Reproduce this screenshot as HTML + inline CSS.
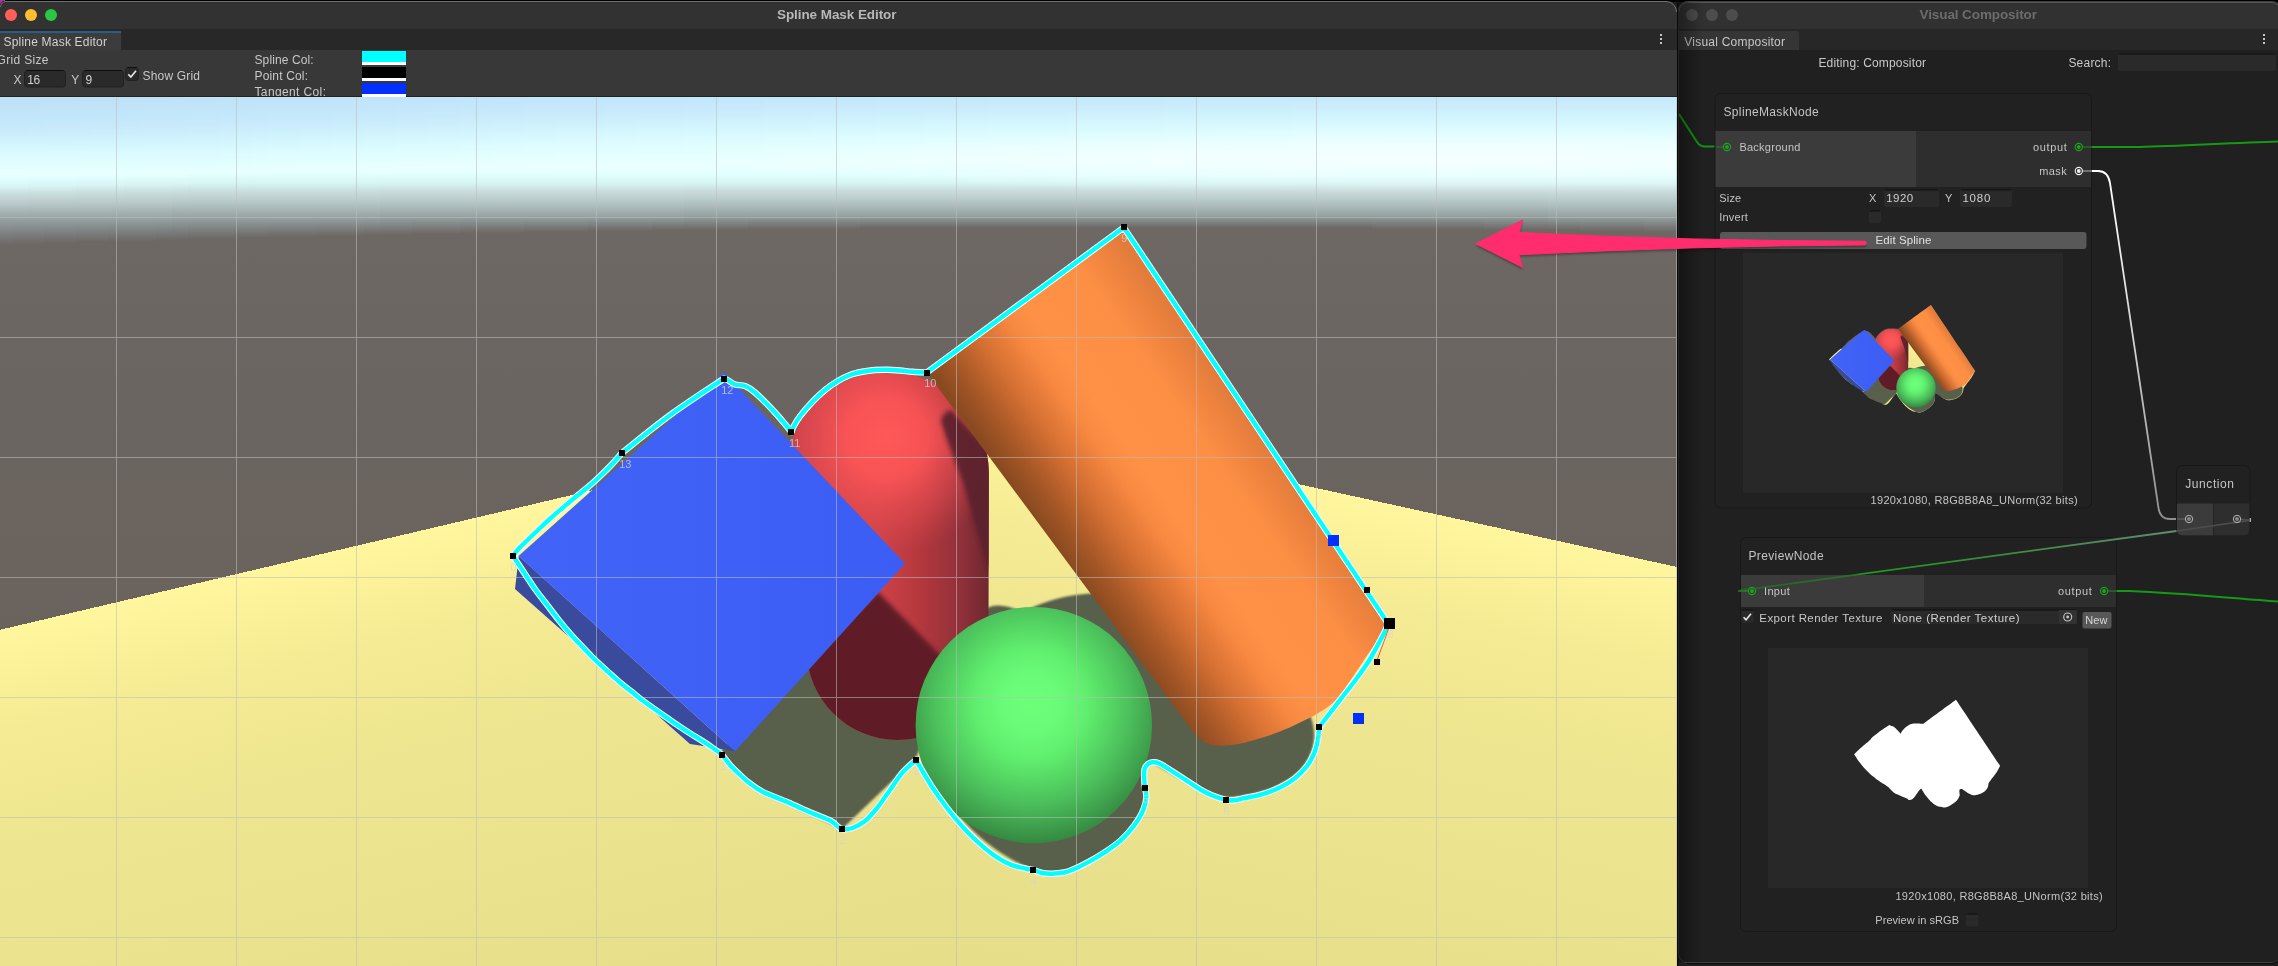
<!DOCTYPE html>
<html><head><meta charset="utf-8"><title>Spline Mask Editor</title>
<style>html,body{margin:0;padding:0;background:#1a1a1a;}body{width:2278px;height:966px;overflow:hidden;position:relative;}</style></head>
<body>
<svg width="2278" height="966" viewBox="0 0 2278 966" font-family="'Liberation Sans', sans-serif" style="position:absolute;left:0;top:0;display:block;will-change:transform">
<defs>
<radialGradient id="skyw"><stop offset="0" stop-color="#fff" stop-opacity="0.55"/><stop offset="0.5" stop-color="#fff" stop-opacity="0.3"/><stop offset="1" stop-color="#fff" stop-opacity="0"/></radialGradient>
<linearGradient id="skyA" x1="0" y1="0" x2="0" y2="1"><stop offset="0.000" stop-color="#bcdcf3"/><stop offset="0.144" stop-color="#bfe0f5"/><stop offset="0.278" stop-color="#c1e4f8"/><stop offset="0.411" stop-color="#c4e8fb"/><stop offset="0.500" stop-color="#c8eafb"/><stop offset="0.656" stop-color="#d0f3fd"/><stop offset="0.833" stop-color="#dcfcff"/><stop offset="1.000" stop-color="#e6ffff"/></linearGradient>
<linearGradient id="skyB" x1="0" y1="0" x2="0" y2="1"><stop offset="0.000" stop-color="#e6ffff"/><stop offset="0.400" stop-color="#eaffff"/><stop offset="0.680" stop-color="#e8ffff"/><stop offset="1.000" stop-color="#e0ffff"/></linearGradient>
<linearGradient id="skyC" x1="0" y1="0" x2="0" y2="1"><stop offset="0.000" stop-color="#e0ffff"/><stop offset="0.200" stop-color="#d8f4f4"/><stop offset="0.300" stop-color="#cfe8e8"/><stop offset="0.400" stop-color="#c9dcdc"/><stop offset="0.600" stop-color="#bccccc"/><stop offset="0.650" stop-color="#b5c8c8"/><stop offset="0.800" stop-color="#aab8b8"/><stop offset="1.000" stop-color="#98a4a4"/></linearGradient>
<linearGradient id="skyD" x1="0" y1="0" x2="0" y2="1"><stop offset="0.000" stop-color="#98a4a4"/><stop offset="0.615" stop-color="#7b7e7e"/><stop offset="1.000" stop-color="#6d6864"/></linearGradient>
<linearGradient id="floorL" gradientUnits="userSpaceOnUse" x1="0" y1="629.8" x2="134.1" y2="1198.2"><stop offset="0.0000" stop-color="#fff69d"/><stop offset="0.0500" stop-color="#fdf39a"/><stop offset="0.1200" stop-color="#f7ee96"/><stop offset="0.1717" stop-color="#f4eb94"/><stop offset="0.2667" stop-color="#f1e891"/><stop offset="0.3700" stop-color="#ede58f"/><stop offset="0.5500" stop-color="#ebe38d"/><stop offset="0.7333" stop-color="#e8e08b"/><stop offset="1.0000" stop-color="#e5dd88"/></linearGradient>
<linearGradient id="floorR" gradientUnits="userSpaceOnUse" x1="945.7" y1="407" x2="820.4" y2="979.6"><stop offset="0.0000" stop-color="#fff69d"/><stop offset="0.0500" stop-color="#fdf39a"/><stop offset="0.1200" stop-color="#f7ee96"/><stop offset="0.1717" stop-color="#f4eb94"/><stop offset="0.2667" stop-color="#f1e891"/><stop offset="0.3700" stop-color="#ede58f"/><stop offset="0.5500" stop-color="#ebe38d"/><stop offset="0.7333" stop-color="#e8e08b"/><stop offset="1.0000" stop-color="#e5dd88"/></linearGradient>
<linearGradient id="cyl" gradientUnits="userSpaceOnUse" x1="1063" y1="555" x2="1251" y2="422">
 <stop offset="0" stop-color="#8a4a20"/>
 <stop offset="0.1" stop-color="#a65726"/>
 <stop offset="0.25" stop-color="#d67033"/>
 <stop offset="0.4" stop-color="#f88941"/>
 <stop offset="0.5" stop-color="#ff9147"/>
 <stop offset="0.78" stop-color="#fd8f45"/>
 <stop offset="0.9" stop-color="#ef843f"/>
 <stop offset="1" stop-color="#e27c3b"/>
</linearGradient>
<linearGradient id="wall" gradientUnits="userSpaceOnUse" x1="0" y1="230" x2="0" y2="640">
 <stop offset="0" stop-color="#6d6864"/>
 <stop offset="0.2" stop-color="#6b6662"/>
 <stop offset="1" stop-color="#6a625d"/>
</linearGradient>
<linearGradient id="capg" gradientUnits="userSpaceOnUse" x1="790" y1="0" x2="989" y2="0">
 <stop offset="0" stop-color="#c2404a"/>
 <stop offset="0.3" stop-color="#d2454b"/>
 <stop offset="0.45" stop-color="#cc4248"/>
 <stop offset="0.65" stop-color="#b5383d"/>
 <stop offset="0.85" stop-color="#92303a"/>
 <stop offset="1" stop-color="#6e2830"/>
</linearGradient>
<radialGradient id="caph" gradientUnits="userSpaceOnUse" cx="886" cy="438" r="118">
 <stop offset="0" stop-color="#ff5858" stop-opacity="1"/>
 <stop offset="0.35" stop-color="#fb5456" stop-opacity="0.92"/>
 <stop offset="0.7" stop-color="#e64c50" stop-opacity="0.5"/>
 <stop offset="1" stop-color="#d2454b" stop-opacity="0"/>
</radialGradient>
<radialGradient id="sph" gradientUnits="userSpaceOnUse" cx="1032" cy="705" r="140" fx="1031" fy="703">
 <stop offset="0" stop-color="#6cff7a"/>
 <stop offset="0.2" stop-color="#6afc78"/>
 <stop offset="0.4" stop-color="#60ee6e"/>
 <stop offset="0.55" stop-color="#56d864"/>
 <stop offset="0.7" stop-color="#4cc05c"/>
 <stop offset="0.85" stop-color="#40a44e"/>
 <stop offset="1" stop-color="#338640"/>
</radialGradient>
<linearGradient id="cubeg" gradientUnits="userSpaceOnUse" x1="518" y1="0" x2="905" y2="0">
 <stop offset="0" stop-color="#4263f7"/>
 <stop offset="1" stop-color="#3c5df4"/>
</linearGradient>
<filter id="blur2" x="-10%" y="-10%" width="120%" height="120%"><feGaussianBlur stdDeviation="2"/></filter>
<filter id="blur4" x="-20%" y="-20%" width="140%" height="140%"><feGaussianBlur stdDeviation="4"/></filter>
<filter id="blur1" x="-10%" y="-10%" width="120%" height="120%"><feGaussianBlur stdDeviation="1"/></filter>
<clipPath id="capclip"><path d="M786.4,473 A101.2,101.2 0 0 1 988.8,473 L988.5,649 A91,91 0 0 1 806.5,649 Z"/></clipPath>
<clipPath id="vp"><rect x="0" y="97" width="1677" height="869"/></clipPath>
<filter id="blurm" x="-5%" y="-5%" width="110%" height="110%"><feGaussianBlur stdDeviation="2.5"/></filter>
<mask id="splmask" maskUnits="userSpaceOnUse" x="400" y="150" width="1100" height="800"><path d="M513.00,556.00 C514.40,558.10 517.62,562.93 521.40,568.60 C525.18,574.27 531.33,583.85 535.70,590.00 C540.07,596.15 543.63,600.33 547.60,605.50 C551.57,610.67 555.53,616.05 559.50,621.00 C563.47,625.95 567.43,630.73 571.40,635.20 C575.37,639.67 579.33,643.67 583.30,647.80 C587.27,651.93 591.23,656.13 595.20,660.00 C599.17,663.87 603.13,667.38 607.10,671.00 C611.07,674.62 615.02,678.32 619.00,681.70 C622.98,685.08 627.02,688.12 631.00,691.30 C634.98,694.48 638.93,697.80 642.90,700.80 C646.87,703.80 650.83,706.50 654.80,709.30 C658.77,712.10 662.73,714.85 666.70,717.60 C670.67,720.35 674.63,723.13 678.60,725.80 C682.57,728.47 686.53,731.07 690.50,733.60 C694.47,736.13 698.43,738.43 702.40,741.00 C706.37,743.57 711.00,746.68 714.30,749.00 C717.60,751.32 720.88,753.92 722.20,754.90 C723.50,756.58 727.48,762.10 730.00,765.00 C732.52,767.90 734.30,769.47 737.30,772.30 C740.30,775.13 743.88,778.80 748.00,782.00 C752.12,785.20 755.50,788.17 762.00,791.50 C768.50,794.83 778.70,798.42 787.00,802.00 C795.30,805.58 804.57,809.88 811.80,813.00 C819.03,816.12 826.27,818.62 830.40,820.70 C834.53,822.78 834.67,824.12 836.60,825.50 C838.53,826.88 839.35,828.58 842.00,829.00 C844.65,829.42 848.67,829.33 852.50,828.00 C856.33,826.67 860.83,824.42 865.00,821.00 C869.17,817.58 873.33,812.67 877.50,807.50 C881.67,802.33 885.83,795.83 890.00,790.00 C894.17,784.17 898.17,777.50 902.50,772.50 C906.83,767.50 913.75,762.08 916.00,760.00 C918.60,764.38 926.37,778.22 931.60,786.30 C936.83,794.38 942.13,801.65 947.40,808.50 C952.67,815.35 957.93,821.62 963.20,827.40 C968.47,833.18 973.73,838.45 979.00,843.20 C984.27,847.95 989.53,852.33 994.80,855.90 C1000.07,859.47 1005.33,862.45 1010.60,864.60 C1015.87,866.75 1022.67,867.93 1026.40,868.80 C1030.13,869.67 1030.37,869.10 1033.00,869.80 C1035.63,870.50 1039.08,872.35 1042.20,873.00 C1045.32,873.65 1048.02,873.78 1051.70,873.70 C1055.38,873.62 1060.62,873.23 1064.30,872.50 C1067.98,871.77 1069.58,871.15 1073.80,869.30 C1078.02,867.45 1084.33,864.30 1089.60,861.40 C1094.87,858.50 1100.13,855.47 1105.40,851.90 C1110.67,848.33 1116.45,844.33 1121.20,840.00 C1125.95,835.67 1130.47,830.37 1133.90,825.90 C1137.33,821.43 1139.83,817.17 1141.80,813.20 C1143.77,809.23 1144.97,805.27 1145.70,802.10 C1146.43,798.93 1146.32,796.57 1146.20,794.20 C1146.08,791.83 1145.33,790.53 1145.00,787.90 C1144.67,785.27 1144.27,781.55 1144.20,778.40 C1144.13,775.25 1143.95,771.42 1144.60,769.00 C1145.25,766.58 1146.73,765.02 1148.10,763.90 C1149.47,762.78 1150.95,762.38 1152.80,762.30 C1154.65,762.22 1156.57,762.28 1159.20,763.40 C1161.83,764.52 1164.40,766.37 1168.60,769.00 C1172.80,771.63 1179.12,775.78 1184.40,779.20 C1189.68,782.62 1195.55,786.73 1200.30,789.50 C1205.05,792.27 1208.63,794.07 1212.90,795.80 C1217.17,797.53 1222.38,799.15 1225.90,799.90 C1229.42,800.65 1231.12,800.55 1234.00,800.30 C1236.88,800.05 1238.57,799.40 1243.20,798.40 C1247.83,797.40 1255.60,796.17 1261.80,794.30 C1268.00,792.43 1274.82,789.93 1280.40,787.20 C1285.98,784.47 1290.95,781.32 1295.30,777.90 C1299.65,774.48 1303.38,770.73 1306.50,766.70 C1309.62,762.67 1312.13,758.05 1314.00,753.70 C1315.87,749.35 1316.82,745.05 1317.70,740.60 C1318.58,736.15 1319.03,729.27 1319.30,727.00 C1320.88,724.93 1325.05,719.48 1328.80,714.60 C1332.55,709.72 1337.48,703.30 1341.80,697.70 C1346.12,692.10 1350.38,686.82 1354.70,681.00 C1359.02,675.18 1363.82,668.87 1367.70,662.80 C1371.58,656.73 1375.12,649.82 1378.00,644.60 C1380.88,639.38 1383.30,635.00 1385.00,631.50 C1386.70,628.00 1387.67,624.92 1388.20,623.60 C1344.12,557.58 1167.83,293.52 1123.75,227.50 C1090.92,251.67 959.58,348.33 926.75,372.50 C924.38,372.38 916.96,372.08 912.50,371.75 C908.04,371.42 904.17,370.83 900.00,370.50 C895.83,370.17 891.67,369.83 887.50,369.75 C883.33,369.67 879.17,369.67 875.00,370.00 C870.83,370.33 866.67,370.92 862.50,371.75 C858.33,372.58 854.17,373.42 850.00,375.00 C845.83,376.58 841.67,378.75 837.50,381.25 C833.33,383.75 829.17,386.58 825.00,390.00 C820.83,393.42 816.67,397.38 812.50,401.75 C808.33,406.12 803.12,412.17 800.00,416.25 C796.88,420.33 795.17,423.62 793.75,426.25 C792.33,428.88 791.88,431.04 791.50,432.00 C788.75,428.75 781.08,419.08 775.00,412.50 C768.92,405.92 760.00,396.92 755.00,392.50 C750.00,388.08 748.33,387.33 745.00,386.00 C741.67,384.67 737.92,385.50 735.00,384.50 C732.08,383.50 729.38,380.96 727.50,380.00 C725.62,379.04 724.38,378.96 723.75,378.75 C715.12,384.57 689.00,401.32 672.00,413.70 C655.00,426.07 630.12,446.45 621.75,453.00 C620.21,454.79 616.12,459.88 612.50,463.75 C608.88,467.62 604.17,472.29 600.00,476.25 C595.83,480.21 591.67,483.96 587.50,487.50 C583.33,491.04 579.17,494.08 575.00,497.50 C570.83,500.92 566.67,504.46 562.50,508.00 C558.33,511.54 554.17,515.00 550.00,518.75 C545.83,522.50 541.67,526.54 537.50,530.50 C533.33,534.46 528.33,539.25 525.00,542.50 C521.67,545.75 519.50,547.75 517.50,550.00 C515.50,552.25 513.75,555.00 513.00,556.00 Z" fill="#fff" filter="url(#blurm)"/></mask>
<clipPath id="splclip"><path d="M513.00,556.00 C514.40,558.10 517.62,562.93 521.40,568.60 C525.18,574.27 531.33,583.85 535.70,590.00 C540.07,596.15 543.63,600.33 547.60,605.50 C551.57,610.67 555.53,616.05 559.50,621.00 C563.47,625.95 567.43,630.73 571.40,635.20 C575.37,639.67 579.33,643.67 583.30,647.80 C587.27,651.93 591.23,656.13 595.20,660.00 C599.17,663.87 603.13,667.38 607.10,671.00 C611.07,674.62 615.02,678.32 619.00,681.70 C622.98,685.08 627.02,688.12 631.00,691.30 C634.98,694.48 638.93,697.80 642.90,700.80 C646.87,703.80 650.83,706.50 654.80,709.30 C658.77,712.10 662.73,714.85 666.70,717.60 C670.67,720.35 674.63,723.13 678.60,725.80 C682.57,728.47 686.53,731.07 690.50,733.60 C694.47,736.13 698.43,738.43 702.40,741.00 C706.37,743.57 711.00,746.68 714.30,749.00 C717.60,751.32 720.88,753.92 722.20,754.90 C723.50,756.58 727.48,762.10 730.00,765.00 C732.52,767.90 734.30,769.47 737.30,772.30 C740.30,775.13 743.88,778.80 748.00,782.00 C752.12,785.20 755.50,788.17 762.00,791.50 C768.50,794.83 778.70,798.42 787.00,802.00 C795.30,805.58 804.57,809.88 811.80,813.00 C819.03,816.12 826.27,818.62 830.40,820.70 C834.53,822.78 834.67,824.12 836.60,825.50 C838.53,826.88 839.35,828.58 842.00,829.00 C844.65,829.42 848.67,829.33 852.50,828.00 C856.33,826.67 860.83,824.42 865.00,821.00 C869.17,817.58 873.33,812.67 877.50,807.50 C881.67,802.33 885.83,795.83 890.00,790.00 C894.17,784.17 898.17,777.50 902.50,772.50 C906.83,767.50 913.75,762.08 916.00,760.00 C918.60,764.38 926.37,778.22 931.60,786.30 C936.83,794.38 942.13,801.65 947.40,808.50 C952.67,815.35 957.93,821.62 963.20,827.40 C968.47,833.18 973.73,838.45 979.00,843.20 C984.27,847.95 989.53,852.33 994.80,855.90 C1000.07,859.47 1005.33,862.45 1010.60,864.60 C1015.87,866.75 1022.67,867.93 1026.40,868.80 C1030.13,869.67 1030.37,869.10 1033.00,869.80 C1035.63,870.50 1039.08,872.35 1042.20,873.00 C1045.32,873.65 1048.02,873.78 1051.70,873.70 C1055.38,873.62 1060.62,873.23 1064.30,872.50 C1067.98,871.77 1069.58,871.15 1073.80,869.30 C1078.02,867.45 1084.33,864.30 1089.60,861.40 C1094.87,858.50 1100.13,855.47 1105.40,851.90 C1110.67,848.33 1116.45,844.33 1121.20,840.00 C1125.95,835.67 1130.47,830.37 1133.90,825.90 C1137.33,821.43 1139.83,817.17 1141.80,813.20 C1143.77,809.23 1144.97,805.27 1145.70,802.10 C1146.43,798.93 1146.32,796.57 1146.20,794.20 C1146.08,791.83 1145.33,790.53 1145.00,787.90 C1144.67,785.27 1144.27,781.55 1144.20,778.40 C1144.13,775.25 1143.95,771.42 1144.60,769.00 C1145.25,766.58 1146.73,765.02 1148.10,763.90 C1149.47,762.78 1150.95,762.38 1152.80,762.30 C1154.65,762.22 1156.57,762.28 1159.20,763.40 C1161.83,764.52 1164.40,766.37 1168.60,769.00 C1172.80,771.63 1179.12,775.78 1184.40,779.20 C1189.68,782.62 1195.55,786.73 1200.30,789.50 C1205.05,792.27 1208.63,794.07 1212.90,795.80 C1217.17,797.53 1222.38,799.15 1225.90,799.90 C1229.42,800.65 1231.12,800.55 1234.00,800.30 C1236.88,800.05 1238.57,799.40 1243.20,798.40 C1247.83,797.40 1255.60,796.17 1261.80,794.30 C1268.00,792.43 1274.82,789.93 1280.40,787.20 C1285.98,784.47 1290.95,781.32 1295.30,777.90 C1299.65,774.48 1303.38,770.73 1306.50,766.70 C1309.62,762.67 1312.13,758.05 1314.00,753.70 C1315.87,749.35 1316.82,745.05 1317.70,740.60 C1318.58,736.15 1319.03,729.27 1319.30,727.00 C1320.88,724.93 1325.05,719.48 1328.80,714.60 C1332.55,709.72 1337.48,703.30 1341.80,697.70 C1346.12,692.10 1350.38,686.82 1354.70,681.00 C1359.02,675.18 1363.82,668.87 1367.70,662.80 C1371.58,656.73 1375.12,649.82 1378.00,644.60 C1380.88,639.38 1383.30,635.00 1385.00,631.50 C1386.70,628.00 1387.67,624.92 1388.20,623.60 C1344.12,557.58 1167.83,293.52 1123.75,227.50 C1090.92,251.67 959.58,348.33 926.75,372.50 C924.38,372.38 916.96,372.08 912.50,371.75 C908.04,371.42 904.17,370.83 900.00,370.50 C895.83,370.17 891.67,369.83 887.50,369.75 C883.33,369.67 879.17,369.67 875.00,370.00 C870.83,370.33 866.67,370.92 862.50,371.75 C858.33,372.58 854.17,373.42 850.00,375.00 C845.83,376.58 841.67,378.75 837.50,381.25 C833.33,383.75 829.17,386.58 825.00,390.00 C820.83,393.42 816.67,397.38 812.50,401.75 C808.33,406.12 803.12,412.17 800.00,416.25 C796.88,420.33 795.17,423.62 793.75,426.25 C792.33,428.88 791.88,431.04 791.50,432.00 C788.75,428.75 781.08,419.08 775.00,412.50 C768.92,405.92 760.00,396.92 755.00,392.50 C750.00,388.08 748.33,387.33 745.00,386.00 C741.67,384.67 737.92,385.50 735.00,384.50 C732.08,383.50 729.38,380.96 727.50,380.00 C725.62,379.04 724.38,378.96 723.75,378.75 C715.12,384.57 689.00,401.32 672.00,413.70 C655.00,426.07 630.12,446.45 621.75,453.00 C620.21,454.79 616.12,459.88 612.50,463.75 C608.88,467.62 604.17,472.29 600.00,476.25 C595.83,480.21 591.67,483.96 587.50,487.50 C583.33,491.04 579.17,494.08 575.00,497.50 C570.83,500.92 566.67,504.46 562.50,508.00 C558.33,511.54 554.17,515.00 550.00,518.75 C545.83,522.50 541.67,526.54 537.50,530.50 C533.33,534.46 528.33,539.25 525.00,542.50 C521.67,545.75 519.50,547.75 517.50,550.00 C515.50,552.25 513.75,555.00 513.00,556.00 Z"/></clipPath>
<path id="splinepath" d="M513.00,556.00 C514.40,558.10 517.62,562.93 521.40,568.60 C525.18,574.27 531.33,583.85 535.70,590.00 C540.07,596.15 543.63,600.33 547.60,605.50 C551.57,610.67 555.53,616.05 559.50,621.00 C563.47,625.95 567.43,630.73 571.40,635.20 C575.37,639.67 579.33,643.67 583.30,647.80 C587.27,651.93 591.23,656.13 595.20,660.00 C599.17,663.87 603.13,667.38 607.10,671.00 C611.07,674.62 615.02,678.32 619.00,681.70 C622.98,685.08 627.02,688.12 631.00,691.30 C634.98,694.48 638.93,697.80 642.90,700.80 C646.87,703.80 650.83,706.50 654.80,709.30 C658.77,712.10 662.73,714.85 666.70,717.60 C670.67,720.35 674.63,723.13 678.60,725.80 C682.57,728.47 686.53,731.07 690.50,733.60 C694.47,736.13 698.43,738.43 702.40,741.00 C706.37,743.57 711.00,746.68 714.30,749.00 C717.60,751.32 720.88,753.92 722.20,754.90 C723.50,756.58 727.48,762.10 730.00,765.00 C732.52,767.90 734.30,769.47 737.30,772.30 C740.30,775.13 743.88,778.80 748.00,782.00 C752.12,785.20 755.50,788.17 762.00,791.50 C768.50,794.83 778.70,798.42 787.00,802.00 C795.30,805.58 804.57,809.88 811.80,813.00 C819.03,816.12 826.27,818.62 830.40,820.70 C834.53,822.78 834.67,824.12 836.60,825.50 C838.53,826.88 839.35,828.58 842.00,829.00 C844.65,829.42 848.67,829.33 852.50,828.00 C856.33,826.67 860.83,824.42 865.00,821.00 C869.17,817.58 873.33,812.67 877.50,807.50 C881.67,802.33 885.83,795.83 890.00,790.00 C894.17,784.17 898.17,777.50 902.50,772.50 C906.83,767.50 913.75,762.08 916.00,760.00 C918.60,764.38 926.37,778.22 931.60,786.30 C936.83,794.38 942.13,801.65 947.40,808.50 C952.67,815.35 957.93,821.62 963.20,827.40 C968.47,833.18 973.73,838.45 979.00,843.20 C984.27,847.95 989.53,852.33 994.80,855.90 C1000.07,859.47 1005.33,862.45 1010.60,864.60 C1015.87,866.75 1022.67,867.93 1026.40,868.80 C1030.13,869.67 1030.37,869.10 1033.00,869.80 C1035.63,870.50 1039.08,872.35 1042.20,873.00 C1045.32,873.65 1048.02,873.78 1051.70,873.70 C1055.38,873.62 1060.62,873.23 1064.30,872.50 C1067.98,871.77 1069.58,871.15 1073.80,869.30 C1078.02,867.45 1084.33,864.30 1089.60,861.40 C1094.87,858.50 1100.13,855.47 1105.40,851.90 C1110.67,848.33 1116.45,844.33 1121.20,840.00 C1125.95,835.67 1130.47,830.37 1133.90,825.90 C1137.33,821.43 1139.83,817.17 1141.80,813.20 C1143.77,809.23 1144.97,805.27 1145.70,802.10 C1146.43,798.93 1146.32,796.57 1146.20,794.20 C1146.08,791.83 1145.33,790.53 1145.00,787.90 C1144.67,785.27 1144.27,781.55 1144.20,778.40 C1144.13,775.25 1143.95,771.42 1144.60,769.00 C1145.25,766.58 1146.73,765.02 1148.10,763.90 C1149.47,762.78 1150.95,762.38 1152.80,762.30 C1154.65,762.22 1156.57,762.28 1159.20,763.40 C1161.83,764.52 1164.40,766.37 1168.60,769.00 C1172.80,771.63 1179.12,775.78 1184.40,779.20 C1189.68,782.62 1195.55,786.73 1200.30,789.50 C1205.05,792.27 1208.63,794.07 1212.90,795.80 C1217.17,797.53 1222.38,799.15 1225.90,799.90 C1229.42,800.65 1231.12,800.55 1234.00,800.30 C1236.88,800.05 1238.57,799.40 1243.20,798.40 C1247.83,797.40 1255.60,796.17 1261.80,794.30 C1268.00,792.43 1274.82,789.93 1280.40,787.20 C1285.98,784.47 1290.95,781.32 1295.30,777.90 C1299.65,774.48 1303.38,770.73 1306.50,766.70 C1309.62,762.67 1312.13,758.05 1314.00,753.70 C1315.87,749.35 1316.82,745.05 1317.70,740.60 C1318.58,736.15 1319.03,729.27 1319.30,727.00 C1320.88,724.93 1325.05,719.48 1328.80,714.60 C1332.55,709.72 1337.48,703.30 1341.80,697.70 C1346.12,692.10 1350.38,686.82 1354.70,681.00 C1359.02,675.18 1363.82,668.87 1367.70,662.80 C1371.58,656.73 1375.12,649.82 1378.00,644.60 C1380.88,639.38 1383.30,635.00 1385.00,631.50 C1386.70,628.00 1387.67,624.92 1388.20,623.60 C1344.12,557.58 1167.83,293.52 1123.75,227.50 C1090.92,251.67 959.58,348.33 926.75,372.50 C924.38,372.38 916.96,372.08 912.50,371.75 C908.04,371.42 904.17,370.83 900.00,370.50 C895.83,370.17 891.67,369.83 887.50,369.75 C883.33,369.67 879.17,369.67 875.00,370.00 C870.83,370.33 866.67,370.92 862.50,371.75 C858.33,372.58 854.17,373.42 850.00,375.00 C845.83,376.58 841.67,378.75 837.50,381.25 C833.33,383.75 829.17,386.58 825.00,390.00 C820.83,393.42 816.67,397.38 812.50,401.75 C808.33,406.12 803.12,412.17 800.00,416.25 C796.88,420.33 795.17,423.62 793.75,426.25 C792.33,428.88 791.88,431.04 791.50,432.00 C788.75,428.75 781.08,419.08 775.00,412.50 C768.92,405.92 760.00,396.92 755.00,392.50 C750.00,388.08 748.33,387.33 745.00,386.00 C741.67,384.67 737.92,385.50 735.00,384.50 C732.08,383.50 729.38,380.96 727.50,380.00 C725.62,379.04 724.38,378.96 723.75,378.75 C715.12,384.57 689.00,401.32 672.00,413.70 C655.00,426.07 630.12,446.45 621.75,453.00 C620.21,454.79 616.12,459.88 612.50,463.75 C608.88,467.62 604.17,472.29 600.00,476.25 C595.83,480.21 591.67,483.96 587.50,487.50 C583.33,491.04 579.17,494.08 575.00,497.50 C570.83,500.92 566.67,504.46 562.50,508.00 C558.33,511.54 554.17,515.00 550.00,518.75 C545.83,522.50 541.67,526.54 537.50,530.50 C533.33,534.46 528.33,539.25 525.00,542.50 C521.67,545.75 519.50,547.75 517.50,550.00 C515.50,552.25 513.75,555.00 513.00,556.00 Z"/>
<g id="scene">
 <rect x="-4" y="97" width="1920" height="1080" fill="url(#wall)"/>
 <g shape-rendering="crispEdges"><g fill="url(#skyA)"><rect x="-4" y="88" width="16" height="82"/><rect x="12" y="88" width="16" height="82"/><rect x="28" y="87" width="16" height="83"/><rect x="44" y="86" width="16" height="84"/><rect x="60" y="86" width="16" height="84"/><rect x="76" y="85" width="16" height="85"/><rect x="92" y="84" width="16" height="86"/><rect x="108" y="84" width="16" height="86"/><rect x="124" y="83" width="16" height="87"/><rect x="140" y="82" width="16" height="88"/><rect x="156" y="82" width="16" height="88"/><rect x="172" y="81" width="16" height="89"/><rect x="188" y="80" width="16" height="90"/><rect x="204" y="80" width="16" height="90"/><rect x="220" y="79" width="16" height="90"/><rect x="236" y="79" width="16" height="90"/><rect x="252" y="78" width="16" height="90"/><rect x="268" y="77" width="16" height="90"/><rect x="284" y="77" width="16" height="90"/><rect x="300" y="76" width="16" height="90"/><rect x="316" y="76" width="16" height="90"/><rect x="332" y="75" width="16" height="90"/><rect x="348" y="75" width="16" height="90"/><rect x="364" y="74" width="16" height="90"/><rect x="380" y="74" width="16" height="90"/><rect x="396" y="73" width="16" height="90"/><rect x="412" y="73" width="16" height="90"/><rect x="428" y="72" width="16" height="90"/><rect x="444" y="72" width="16" height="90"/><rect x="460" y="71" width="16" height="90"/><rect x="476" y="71" width="16" height="90"/><rect x="492" y="70" width="16" height="90"/><rect x="508" y="70" width="16" height="90"/><rect x="524" y="69" width="16" height="90"/><rect x="540" y="69" width="16" height="90"/><rect x="556" y="68" width="16" height="90"/><rect x="572" y="68" width="16" height="90"/><rect x="588" y="68" width="16" height="90"/><rect x="604" y="67" width="16" height="90"/><rect x="620" y="67" width="16" height="90"/><rect x="636" y="66" width="16" height="90"/><rect x="652" y="66" width="16" height="90"/><rect x="668" y="66" width="16" height="90"/><rect x="684" y="65" width="16" height="90"/><rect x="700" y="65" width="16" height="90"/><rect x="716" y="64" width="16" height="90"/><rect x="732" y="64" width="16" height="90"/><rect x="748" y="64" width="16" height="90"/><rect x="764" y="63" width="16" height="90"/><rect x="780" y="63" width="16" height="90"/><rect x="796" y="63" width="16" height="90"/><rect x="812" y="62" width="16" height="90"/><rect x="828" y="62" width="16" height="90"/><rect x="844" y="62" width="16" height="90"/><rect x="860" y="62" width="16" height="90"/><rect x="876" y="61" width="16" height="90"/><rect x="892" y="61" width="16" height="90"/><rect x="908" y="61" width="16" height="90"/><rect x="924" y="60" width="16" height="90"/><rect x="940" y="60" width="16" height="90"/><rect x="956" y="60" width="16" height="90"/><rect x="972" y="60" width="16" height="90"/><rect x="988" y="59" width="16" height="90"/><rect x="1004" y="59" width="16" height="90"/><rect x="1020" y="59" width="16" height="90"/><rect x="1036" y="59" width="16" height="90"/><rect x="1052" y="59" width="16" height="90"/><rect x="1068" y="58" width="16" height="90"/><rect x="1084" y="58" width="16" height="90"/><rect x="1100" y="58" width="16" height="90"/><rect x="1116" y="58" width="16" height="90"/><rect x="1132" y="58" width="16" height="90"/><rect x="1148" y="58" width="16" height="90"/><rect x="1164" y="57" width="16" height="90"/><rect x="1180" y="57" width="16" height="90"/><rect x="1196" y="57" width="16" height="90"/><rect x="1212" y="57" width="16" height="90"/><rect x="1228" y="57" width="16" height="90"/><rect x="1244" y="57" width="16" height="90"/><rect x="1260" y="57" width="16" height="90"/><rect x="1276" y="57" width="16" height="90"/><rect x="1292" y="56" width="16" height="90"/><rect x="1308" y="56" width="16" height="90"/><rect x="1324" y="56" width="16" height="90"/><rect x="1340" y="56" width="16" height="90"/><rect x="1356" y="56" width="16" height="90"/><rect x="1372" y="56" width="16" height="90"/><rect x="1388" y="56" width="16" height="90"/><rect x="1404" y="56" width="16" height="90"/><rect x="1420" y="56" width="16" height="90"/><rect x="1436" y="56" width="16" height="90"/><rect x="1452" y="56" width="16" height="90"/><rect x="1468" y="56" width="16" height="90"/><rect x="1484" y="56" width="16" height="90"/><rect x="1500" y="56" width="16" height="90"/><rect x="1516" y="56" width="16" height="90"/><rect x="1532" y="56" width="16" height="90"/><rect x="1548" y="56" width="16" height="90"/><rect x="1564" y="56" width="16" height="90"/><rect x="1580" y="56" width="16" height="90"/><rect x="1596" y="56" width="16" height="90"/><rect x="1612" y="56" width="16" height="90"/><rect x="1628" y="56" width="16" height="90"/><rect x="1644" y="56" width="16" height="90"/><rect x="1660" y="56" width="16" height="90"/><rect x="1676" y="57" width="16" height="90"/><rect x="1692" y="57" width="16" height="90"/><rect x="1708" y="57" width="16" height="90"/><rect x="1724" y="57" width="16" height="90"/><rect x="1740" y="57" width="16" height="90"/><rect x="1756" y="57" width="16" height="90"/><rect x="1772" y="57" width="16" height="90"/><rect x="1788" y="57" width="16" height="90"/><rect x="1804" y="58" width="16" height="90"/><rect x="1820" y="58" width="16" height="90"/><rect x="1836" y="58" width="16" height="90"/><rect x="1852" y="58" width="16" height="90"/><rect x="1868" y="58" width="16" height="90"/><rect x="1884" y="58" width="16" height="90"/><rect x="1900" y="59" width="16" height="90"/></g><g fill="url(#skyB)"><rect x="-4" y="170" width="16" height="9"/><rect x="12" y="170" width="16" height="9"/><rect x="28" y="170" width="16" height="8"/><rect x="44" y="170" width="16" height="8"/><rect x="60" y="170" width="16" height="8"/><rect x="76" y="170" width="16" height="7"/><rect x="92" y="170" width="16" height="7"/><rect x="108" y="170" width="16" height="7"/><rect x="124" y="170" width="16" height="6"/><rect x="140" y="170" width="16" height="6"/><rect x="156" y="170" width="16" height="6"/><rect x="172" y="170" width="16" height="6"/><rect x="188" y="170" width="16" height="5"/><rect x="204" y="170" width="16" height="5"/><rect x="220" y="169" width="16" height="6"/><rect x="236" y="169" width="16" height="6"/><rect x="252" y="168" width="16" height="7"/><rect x="268" y="167" width="16" height="8"/><rect x="284" y="167" width="16" height="8"/><rect x="300" y="166" width="16" height="9"/><rect x="316" y="166" width="16" height="9"/><rect x="332" y="165" width="16" height="10"/><rect x="348" y="165" width="16" height="10"/><rect x="364" y="164" width="16" height="11"/><rect x="380" y="164" width="16" height="11"/><rect x="396" y="163" width="16" height="12"/><rect x="412" y="163" width="16" height="12"/><rect x="428" y="162" width="16" height="13"/><rect x="444" y="162" width="16" height="13"/><rect x="460" y="161" width="16" height="14"/><rect x="476" y="161" width="16" height="14"/><rect x="492" y="160" width="16" height="15"/><rect x="508" y="160" width="16" height="15"/><rect x="524" y="159" width="16" height="16"/><rect x="540" y="159" width="16" height="16"/><rect x="556" y="158" width="16" height="17"/><rect x="572" y="158" width="16" height="17"/><rect x="588" y="158" width="16" height="17"/><rect x="604" y="157" width="16" height="18"/><rect x="620" y="157" width="16" height="18"/><rect x="636" y="156" width="16" height="19"/><rect x="652" y="156" width="16" height="19"/><rect x="668" y="156" width="16" height="19"/><rect x="684" y="155" width="16" height="20"/><rect x="700" y="155" width="16" height="20"/><rect x="716" y="154" width="16" height="21"/><rect x="732" y="154" width="16" height="21"/><rect x="748" y="154" width="16" height="21"/><rect x="764" y="153" width="16" height="22"/><rect x="780" y="153" width="16" height="22"/><rect x="796" y="153" width="16" height="22"/><rect x="812" y="152" width="16" height="23"/><rect x="828" y="152" width="16" height="23"/><rect x="844" y="152" width="16" height="23"/><rect x="860" y="152" width="16" height="23"/><rect x="876" y="151" width="16" height="24"/><rect x="892" y="151" width="16" height="24"/><rect x="908" y="151" width="16" height="24"/><rect x="924" y="150" width="16" height="25"/><rect x="940" y="150" width="16" height="25"/><rect x="956" y="150" width="16" height="25"/><rect x="972" y="150" width="16" height="25"/><rect x="988" y="149" width="16" height="26"/><rect x="1004" y="149" width="16" height="26"/><rect x="1020" y="149" width="16" height="26"/><rect x="1036" y="149" width="16" height="26"/><rect x="1052" y="149" width="16" height="26"/><rect x="1068" y="148" width="16" height="27"/><rect x="1084" y="148" width="16" height="27"/><rect x="1100" y="148" width="16" height="27"/><rect x="1116" y="148" width="16" height="27"/><rect x="1132" y="148" width="16" height="27"/><rect x="1148" y="148" width="16" height="27"/><rect x="1164" y="147" width="16" height="28"/><rect x="1180" y="147" width="16" height="28"/><rect x="1196" y="147" width="16" height="28"/><rect x="1212" y="147" width="16" height="28"/><rect x="1228" y="147" width="16" height="28"/><rect x="1244" y="147" width="16" height="28"/><rect x="1260" y="147" width="16" height="28"/><rect x="1276" y="147" width="16" height="28"/><rect x="1292" y="146" width="16" height="29"/><rect x="1308" y="146" width="16" height="29"/><rect x="1324" y="146" width="16" height="29"/><rect x="1340" y="146" width="16" height="29"/><rect x="1356" y="146" width="16" height="29"/><rect x="1372" y="146" width="16" height="29"/><rect x="1388" y="146" width="16" height="29"/><rect x="1404" y="146" width="16" height="29"/><rect x="1420" y="146" width="16" height="29"/><rect x="1436" y="146" width="16" height="29"/><rect x="1452" y="146" width="16" height="29"/><rect x="1468" y="146" width="16" height="29"/><rect x="1484" y="146" width="16" height="29"/><rect x="1500" y="146" width="16" height="29"/><rect x="1516" y="146" width="16" height="29"/><rect x="1532" y="146" width="16" height="29"/><rect x="1548" y="146" width="16" height="29"/><rect x="1564" y="146" width="16" height="29"/><rect x="1580" y="146" width="16" height="29"/><rect x="1596" y="146" width="16" height="29"/><rect x="1612" y="146" width="16" height="29"/><rect x="1628" y="146" width="16" height="29"/><rect x="1644" y="146" width="16" height="29"/><rect x="1660" y="146" width="16" height="29"/><rect x="1676" y="147" width="16" height="28"/><rect x="1692" y="147" width="16" height="28"/><rect x="1708" y="147" width="16" height="28"/><rect x="1724" y="147" width="16" height="28"/><rect x="1740" y="147" width="16" height="28"/><rect x="1756" y="147" width="16" height="28"/><rect x="1772" y="147" width="16" height="28"/><rect x="1788" y="147" width="16" height="28"/><rect x="1804" y="148" width="16" height="27"/><rect x="1820" y="148" width="16" height="27"/><rect x="1836" y="148" width="16" height="27"/><rect x="1852" y="148" width="16" height="27"/><rect x="1868" y="148" width="16" height="27"/><rect x="1884" y="148" width="16" height="27"/><rect x="1900" y="149" width="16" height="26"/></g><g fill="url(#skyC)"><rect x="-4" y="179" width="16" height="39"/><rect x="12" y="179" width="16" height="39"/><rect x="28" y="178" width="16" height="40"/><rect x="44" y="178" width="16" height="40"/><rect x="60" y="178" width="16" height="40"/><rect x="76" y="177" width="16" height="41"/><rect x="92" y="177" width="16" height="41"/><rect x="108" y="177" width="16" height="41"/><rect x="124" y="176" width="16" height="42"/><rect x="140" y="176" width="16" height="42"/><rect x="156" y="176" width="16" height="42"/><rect x="172" y="176" width="16" height="41"/><rect x="188" y="175" width="16" height="42"/><rect x="204" y="175" width="16" height="42"/><rect x="220" y="175" width="16" height="42"/><rect x="236" y="175" width="16" height="42"/><rect x="252" y="175" width="16" height="42"/><rect x="268" y="175" width="16" height="42"/><rect x="284" y="175" width="16" height="42"/><rect x="300" y="175" width="16" height="42"/><rect x="316" y="175" width="16" height="42"/><rect x="332" y="175" width="16" height="42"/><rect x="348" y="175" width="16" height="42"/><rect x="364" y="175" width="16" height="42"/><rect x="380" y="175" width="16" height="41"/><rect x="396" y="175" width="16" height="41"/><rect x="412" y="175" width="16" height="41"/><rect x="428" y="175" width="16" height="41"/><rect x="444" y="175" width="16" height="41"/><rect x="460" y="175" width="16" height="41"/><rect x="476" y="175" width="16" height="41"/><rect x="492" y="175" width="16" height="41"/><rect x="508" y="175" width="16" height="41"/><rect x="524" y="175" width="16" height="41"/><rect x="540" y="175" width="16" height="41"/><rect x="556" y="175" width="16" height="41"/><rect x="572" y="175" width="16" height="41"/><rect x="588" y="175" width="16" height="41"/><rect x="604" y="175" width="16" height="41"/><rect x="620" y="175" width="16" height="41"/><rect x="636" y="175" width="16" height="41"/><rect x="652" y="175" width="16" height="41"/><rect x="668" y="175" width="16" height="41"/><rect x="684" y="175" width="16" height="40"/><rect x="700" y="175" width="16" height="40"/><rect x="716" y="175" width="16" height="40"/><rect x="732" y="175" width="16" height="40"/><rect x="748" y="175" width="16" height="40"/><rect x="764" y="175" width="16" height="40"/><rect x="780" y="175" width="16" height="40"/><rect x="796" y="175" width="16" height="40"/><rect x="812" y="175" width="16" height="40"/><rect x="828" y="175" width="16" height="40"/><rect x="844" y="175" width="16" height="40"/><rect x="860" y="175" width="16" height="40"/><rect x="876" y="175" width="16" height="40"/><rect x="892" y="175" width="16" height="40"/><rect x="908" y="175" width="16" height="40"/><rect x="924" y="175" width="16" height="40"/><rect x="940" y="175" width="16" height="40"/><rect x="956" y="175" width="16" height="40"/><rect x="972" y="175" width="16" height="40"/><rect x="988" y="175" width="16" height="40"/><rect x="1004" y="175" width="16" height="40"/><rect x="1020" y="175" width="16" height="40"/><rect x="1036" y="175" width="16" height="40"/><rect x="1052" y="175" width="16" height="40"/><rect x="1068" y="175" width="16" height="40"/><rect x="1084" y="175" width="16" height="40"/><rect x="1100" y="175" width="16" height="40"/><rect x="1116" y="175" width="16" height="40"/><rect x="1132" y="175" width="16" height="40"/><rect x="1148" y="175" width="16" height="40"/><rect x="1164" y="175" width="16" height="40"/><rect x="1180" y="175" width="16" height="40"/><rect x="1196" y="175" width="16" height="40"/><rect x="1212" y="175" width="16" height="40"/><rect x="1228" y="175" width="16" height="40"/><rect x="1244" y="175" width="16" height="40"/><rect x="1260" y="175" width="16" height="40"/><rect x="1276" y="175" width="16" height="40"/><rect x="1292" y="175" width="16" height="40"/><rect x="1308" y="175" width="16" height="40"/><rect x="1324" y="175" width="16" height="40"/><rect x="1340" y="175" width="16" height="40"/><rect x="1356" y="175" width="16" height="40"/><rect x="1372" y="175" width="16" height="40"/><rect x="1388" y="175" width="16" height="40"/><rect x="1404" y="175" width="16" height="40"/><rect x="1420" y="175" width="16" height="40"/><rect x="1436" y="175" width="16" height="40"/><rect x="1452" y="175" width="16" height="40"/><rect x="1468" y="175" width="16" height="40"/><rect x="1484" y="175" width="16" height="40"/><rect x="1500" y="175" width="16" height="40"/><rect x="1516" y="175" width="16" height="40"/><rect x="1532" y="175" width="16" height="40"/><rect x="1548" y="175" width="16" height="41"/><rect x="1564" y="175" width="16" height="41"/><rect x="1580" y="175" width="16" height="41"/><rect x="1596" y="175" width="16" height="41"/><rect x="1612" y="175" width="16" height="41"/><rect x="1628" y="175" width="16" height="41"/><rect x="1644" y="175" width="16" height="41"/><rect x="1660" y="175" width="16" height="41"/><rect x="1676" y="175" width="16" height="41"/><rect x="1692" y="175" width="16" height="41"/><rect x="1708" y="175" width="16" height="41"/><rect x="1724" y="175" width="16" height="41"/><rect x="1740" y="175" width="16" height="41"/><rect x="1756" y="175" width="16" height="41"/><rect x="1772" y="175" width="16" height="41"/><rect x="1788" y="175" width="16" height="41"/><rect x="1804" y="175" width="16" height="41"/><rect x="1820" y="175" width="16" height="41"/><rect x="1836" y="175" width="16" height="41"/><rect x="1852" y="175" width="16" height="42"/><rect x="1868" y="175" width="16" height="42"/><rect x="1884" y="175" width="16" height="42"/><rect x="1900" y="175" width="16" height="42"/></g><g fill="url(#skyD)"><rect x="-4" y="218" width="16" height="27"/><rect x="12" y="218" width="16" height="26"/><rect x="28" y="218" width="16" height="26"/><rect x="44" y="218" width="16" height="25"/><rect x="60" y="218" width="16" height="25"/><rect x="76" y="218" width="16" height="24"/><rect x="92" y="218" width="16" height="24"/><rect x="108" y="218" width="16" height="23"/><rect x="124" y="218" width="16" height="23"/><rect x="140" y="218" width="16" height="23"/><rect x="156" y="218" width="16" height="22"/><rect x="172" y="217" width="16" height="23"/><rect x="188" y="217" width="16" height="22"/><rect x="204" y="217" width="16" height="22"/><rect x="220" y="217" width="16" height="22"/><rect x="236" y="217" width="16" height="21"/><rect x="252" y="217" width="16" height="21"/><rect x="268" y="217" width="16" height="20"/><rect x="284" y="217" width="16" height="20"/><rect x="300" y="217" width="16" height="20"/><rect x="316" y="217" width="16" height="19"/><rect x="332" y="217" width="16" height="19"/><rect x="348" y="217" width="16" height="19"/><rect x="364" y="217" width="16" height="18"/><rect x="380" y="216" width="16" height="19"/><rect x="396" y="216" width="16" height="19"/><rect x="412" y="216" width="16" height="18"/><rect x="428" y="216" width="16" height="18"/><rect x="444" y="216" width="16" height="18"/><rect x="460" y="216" width="16" height="17"/><rect x="476" y="216" width="16" height="17"/><rect x="492" y="216" width="16" height="17"/><rect x="508" y="216" width="16" height="17"/><rect x="524" y="216" width="16" height="16"/><rect x="540" y="216" width="16" height="16"/><rect x="556" y="216" width="16" height="16"/><rect x="572" y="216" width="16" height="16"/><rect x="588" y="216" width="16" height="15"/><rect x="604" y="216" width="16" height="15"/><rect x="620" y="216" width="16" height="15"/><rect x="636" y="216" width="16" height="15"/><rect x="652" y="216" width="16" height="14"/><rect x="668" y="216" width="16" height="14"/><rect x="684" y="215" width="16" height="15"/><rect x="700" y="215" width="16" height="15"/><rect x="716" y="215" width="16" height="15"/><rect x="732" y="215" width="16" height="15"/><rect x="748" y="215" width="16" height="14"/><rect x="764" y="215" width="16" height="14"/><rect x="780" y="215" width="16" height="14"/><rect x="796" y="215" width="16" height="14"/><rect x="812" y="215" width="16" height="14"/><rect x="828" y="215" width="16" height="14"/><rect x="844" y="215" width="16" height="14"/><rect x="860" y="215" width="16" height="13"/><rect x="876" y="215" width="16" height="13"/><rect x="892" y="215" width="16" height="13"/><rect x="908" y="215" width="16" height="13"/><rect x="924" y="215" width="16" height="13"/><rect x="940" y="215" width="16" height="13"/><rect x="956" y="215" width="16" height="13"/><rect x="972" y="215" width="16" height="13"/><rect x="988" y="215" width="16" height="13"/><rect x="1004" y="215" width="16" height="13"/><rect x="1020" y="215" width="16" height="13"/><rect x="1036" y="215" width="16" height="13"/><rect x="1052" y="215" width="16" height="13"/><rect x="1068" y="215" width="16" height="13"/><rect x="1084" y="215" width="16" height="13"/><rect x="1100" y="215" width="16" height="13"/><rect x="1116" y="215" width="16" height="13"/><rect x="1132" y="215" width="16" height="13"/><rect x="1148" y="215" width="16" height="13"/><rect x="1164" y="215" width="16" height="13"/><rect x="1180" y="215" width="16" height="13"/><rect x="1196" y="215" width="16" height="13"/><rect x="1212" y="215" width="16" height="13"/><rect x="1228" y="215" width="16" height="13"/><rect x="1244" y="215" width="16" height="13"/><rect x="1260" y="215" width="16" height="13"/><rect x="1276" y="215" width="16" height="13"/><rect x="1292" y="215" width="16" height="13"/><rect x="1308" y="215" width="16" height="13"/><rect x="1324" y="215" width="16" height="13"/><rect x="1340" y="215" width="16" height="13"/><rect x="1356" y="215" width="16" height="13"/><rect x="1372" y="215" width="16" height="14"/><rect x="1388" y="215" width="16" height="14"/><rect x="1404" y="215" width="16" height="14"/><rect x="1420" y="215" width="16" height="14"/><rect x="1436" y="215" width="16" height="14"/><rect x="1452" y="215" width="16" height="14"/><rect x="1468" y="215" width="16" height="14"/><rect x="1484" y="215" width="16" height="15"/><rect x="1500" y="215" width="16" height="15"/><rect x="1516" y="215" width="16" height="15"/><rect x="1532" y="215" width="16" height="15"/><rect x="1548" y="216" width="16" height="14"/><rect x="1564" y="216" width="16" height="14"/><rect x="1580" y="216" width="16" height="15"/><rect x="1596" y="216" width="16" height="15"/><rect x="1612" y="216" width="16" height="15"/><rect x="1628" y="216" width="16" height="15"/><rect x="1644" y="216" width="16" height="16"/><rect x="1660" y="216" width="16" height="16"/><rect x="1676" y="216" width="16" height="16"/><rect x="1692" y="216" width="16" height="16"/><rect x="1708" y="216" width="16" height="17"/><rect x="1724" y="216" width="16" height="17"/><rect x="1740" y="216" width="16" height="17"/><rect x="1756" y="216" width="16" height="17"/><rect x="1772" y="216" width="16" height="18"/><rect x="1788" y="216" width="16" height="18"/><rect x="1804" y="216" width="16" height="18"/><rect x="1820" y="216" width="16" height="19"/><rect x="1836" y="216" width="16" height="19"/><rect x="1852" y="217" width="16" height="18"/><rect x="1868" y="217" width="16" height="19"/><rect x="1884" y="217" width="16" height="19"/><rect x="1900" y="217" width="16" height="19"/></g></g>
 <ellipse cx="1450" cy="160" rx="750" ry="34" fill="url(#skyw)"/>
 <polygon points="-4,630.7 945.7,407 946,407 946,1177 -4,1177" fill="url(#floorL)" shape-rendering="crispEdges"/>
 <polygon points="946,407 1917,619.5 1917,1177 946,1177" fill="url(#floorR)" shape-rendering="crispEdges"/>
 <!-- shadows -->
 <g fill="#59614c">
  <path filter="url(#blur1)" d="M720,752 L730,766 C745,785 770,797 790,805 L842,829 L887,786 L916,758 L940,700 L850,620 Z"/>
  <path filter="url(#blur1)" clip-path="url(#splclip)" d="M945,795 C963,826 992,852 1033,870 C1062,880 1100,866 1130,834 C1148,812 1152,790 1147,770 L1150,700 L1000,700 Z"/>
  <path filter="url(#blur1)" d="M984,640 L986,609 C994,603 1008,605 1022,612 C1040,604 1058,596 1085,594 L1130,590 L1240,720 L1300,715 L1310,715 C1318,735 1314,752 1303,767 C1294,778 1280,785 1269,789.5 C1255,794 1240,797 1224,797.5 C1197,791 1176,776 1153,763 L1145,765 L1120,700 L986,700 Z"/>
 </g>
 <!-- capsule -->
 <g clip-path="url(#capclip)">
  <rect x="780" y="365" width="215" height="380" fill="url(#capg)"/>
  <rect x="780" y="365" width="215" height="380" fill="url(#caph)"/>
  <path filter="url(#blur2)" d="M941,421 Q943,412 951,410 L1005,468 L1005,600 L985,560 L963,482 L947,440 Z" fill="#5c222d" opacity="0.95"/>
  <path filter="url(#blur2)" d="M878,592 L965,680 L965,760 L780,760 L780,680 Z" fill="#611f25"/>
 </g>
 <!-- cube -->
 <polygon points="518.75,556 515,589 690,744 700,745.5 735,751.25" fill="#3a4a9c"/>
 <polygon points="723.75,372.5 905,563.5 735,751.25 518.5,556" fill="url(#cubeg)"/>
 <!-- cylinder -->
 <path d="M926.75,372.5 Q1024,296 1123.75,227.5 L1387.20,622.20 C1385.75,625.00 1382.03,633.20 1378.50,639.00 C1374.97,644.80 1369.92,651.25 1366.00,657.00 C1362.08,662.75 1359.95,666.40 1355.00,673.50 C1350.05,680.60 1342.52,692.92 1336.30,699.60 C1330.08,706.28 1323.92,709.72 1317.70,713.60 C1311.48,717.48 1305.22,719.95 1299.00,722.90 C1292.78,725.85 1286.60,728.82 1280.40,731.30 C1274.20,733.78 1268.00,735.85 1261.80,737.80 C1255.60,739.75 1249.42,741.70 1243.20,743.00 C1236.98,744.30 1229.78,745.32 1224.50,745.60 C1219.22,745.88 1215.22,745.53 1211.50,744.70 C1207.78,743.87 1205.00,742.37 1202.20,740.60 C1199.40,738.83 1195.95,735.18 1194.70,734.10 Z" fill="url(#cyl)"/>
 <!-- sphere -->
 <circle cx="1033.8" cy="725.1" r="118.2" fill="url(#sph)"/>
</g>
</defs>
<rect x="0" y="0" width="2278" height="966" fill="#1e1e1e"/>
<rect x="0" y="0" width="2278" height="2" fill="#000"/>
<path d="M0,0 h5 v1 h-2 l-3,3 Z" fill="#b02cb0"/>
<g id="leftwin">
<path d="M0,29 V7 A6,6 0 0 1 6,1 H1667 A10,10 0 0 1 1677,11 V29 Z" fill="#323232"/>
<path d="M0.5,7 A5.5,5.5 0 0 1 6,1.5 H1666 A10.5,10.5 0 0 1 1676.5,12" fill="none" stroke="#6e6e6e" stroke-width="1"/>
<circle cx="11" cy="15" r="6" fill="#ff5f57"/><circle cx="31" cy="15" r="6" fill="#febc2e"/><circle cx="51" cy="15" r="6" fill="#28c840"/>
<text x="777.0" y="18.7" font-size="13.5" fill="#b8b8b8" textLength="119.5" lengthAdjust="spacing" font-weight="bold" >Spline Mask Editor</text>
<rect x="0" y="29" width="1677" height="21" fill="#282828"/>
<rect x="0" y="31" width="121" height="19" fill="#3c3c3c"/>
<rect x="0" y="31" width="121" height="2" fill="#2c5d87"/>
<text x="3.5" y="46.0" font-size="12" fill="#d2d2d2" textLength="103.5" lengthAdjust="spacing" >Spline Mask Editor</text>
<rect x="1660" y="34" width="2" height="2" fill="#c4c4c4"/>
<rect x="1660" y="38" width="2" height="2" fill="#c4c4c4"/>
<rect x="1660" y="42" width="2" height="2" fill="#c4c4c4"/>
<rect x="0" y="50" width="1677" height="47" fill="#383838"/>
<text x="-3.5" y="64.0" font-size="12" fill="#c8c8c8" textLength="52.0" lengthAdjust="spacing" >Grid Size</text>
<text x="13.4" y="83.5" font-size="12" fill="#c8c8c8" >X</text>
<rect x="24.5" y="70.5" width="41" height="16.5" rx="3" fill="#2a2a2a" stroke="#212121"/>
<path d="M26.5,70.5 H63.5" stroke="#0d0d0d"/>
<text x="27.3" y="83.5" font-size="12" fill="#d2d2d2" textLength="13.0" lengthAdjust="spacing" >16</text>
<text x="71.2" y="83.5" font-size="12" fill="#c8c8c8" >Y</text>
<rect x="82.5" y="70.5" width="41" height="16.5" rx="3" fill="#2a2a2a" stroke="#212121"/>
<path d="M84.5,70.5 H121.5" stroke="#0d0d0d"/>
<text x="85.4" y="83.5" font-size="12" fill="#d2d2d2" >9</text>
<rect x="125.5" y="67.5" width="13" height="13" rx="3" fill="#2a2a2a" stroke="#212121"/>
<path d="M127.5,67.5 H136.5" stroke="#0d0d0d"/>
<path d="M128.3,74.3 L130.9,77 L136,70.8" fill="none" stroke="#e4e4e4" stroke-width="1.7"/>
<text x="142.5" y="79.5" font-size="12" fill="#c8c8c8" textLength="57.5" lengthAdjust="spacing" >Show Grid</text>
<text x="254.5" y="64.0" font-size="12" fill="#c8c8c8" textLength="59.2" lengthAdjust="spacing" >Spline Col:</text>
<text x="254.5" y="80.0" font-size="12" fill="#c8c8c8" textLength="53.5" lengthAdjust="spacing" >Point Col:</text>
<text x="254.5" y="96.0" font-size="12" fill="#c8c8c8" textLength="71.5" lengthAdjust="spacing" >Tangent Col:</text>
<rect x="0" y="96" width="1677" height="1" fill="#232323"/>
<g shape-rendering="crispEdges"><rect x="362" y="51" width="44" height="11" fill="#00ffff"/><rect x="362" y="62" width="44" height="3" fill="#fff"/><rect x="362" y="67" width="44" height="11" fill="#000"/><rect x="362" y="78" width="44" height="3" fill="#fff"/><rect x="362" y="83" width="44" height="11" fill="#0030ff"/><rect x="362" y="94" width="44" height="3" fill="#fff"/></g>
<g clip-path="url(#vp)">
<use href="#scene"/>
<path d="M116.5,97 V966 M236.5,97 V966 M356.5,97 V966 M476.5,97 V966 M596.5,97 V966 M716.5,97 V966 M836.5,97 V966 M956.5,97 V966 M1076.5,97 V966 M1196.5,97 V966 M1316.5,97 V966 M1436.5,97 V966 M1556.5,97 V966 M1676.5,97 V966 M0,217.5 H1677 M0,337.5 H1677 M0,457.5 H1677 M0,577.5 H1677 M0,697.5 H1677 M0,817.5 H1677 M0,937.5 H1677" stroke="#bdbdbd" stroke-opacity="0.57" stroke-width="1" fill="none" shape-rendering="crispEdges"/>
<use href="#splinepath" fill="none" stroke="#ffffff" stroke-width="6.4" stroke-linejoin="round"/>
<use href="#splinepath" fill="none" stroke="#00ffff" stroke-width="4.4" stroke-linejoin="round"/>
<text x="510.5" y="570.8" font-size="11" fill="#d4d4d4" fill-opacity="0.78">0</text><rect x="510.0" y="553.0" width="6" height="6" fill="#000" shape-rendering="crispEdges"/>
<text x="719.7" y="769.7" font-size="11" fill="#d4d4d4" fill-opacity="0.78">1</text><rect x="719.0" y="752.0" width="6" height="6" fill="#000" shape-rendering="crispEdges"/>
<text x="839.5" y="843.8" font-size="11" fill="#d4d4d4" fill-opacity="0.78">2</text><rect x="839.0" y="826.0" width="6" height="6" fill="#000" shape-rendering="crispEdges"/>
<text x="913.5" y="774.8" font-size="11" fill="#d4d4d4" fill-opacity="0.78">3</text><rect x="913.0" y="757.0" width="6" height="6" fill="#000" shape-rendering="crispEdges"/>
<text x="1030.5" y="884.6" font-size="11" fill="#d4d4d4" fill-opacity="0.78">4</text><rect x="1030.0" y="867.0" width="6" height="6" fill="#000" shape-rendering="crispEdges"/>
<text x="1142.5" y="802.7" font-size="11" fill="#d4d4d4" fill-opacity="0.78">5</text><rect x="1142.0" y="785.0" width="6" height="6" fill="#000" shape-rendering="crispEdges"/>
<text x="1223.4" y="814.7" font-size="11" fill="#d4d4d4" fill-opacity="0.78">6</text><rect x="1223.0" y="797.0" width="6" height="6" fill="#000" shape-rendering="crispEdges"/>
<text x="1316.8" y="741.8" font-size="11" fill="#d4d4d4" fill-opacity="0.78">7</text><rect x="1316.0" y="724.0" width="6" height="6" fill="#000" shape-rendering="crispEdges"/>
<text x="1387.2" y="638.3" font-size="11" fill="#d4d4d4" fill-opacity="0.78">8</text><rect x="1384.0" y="618.0" width="11" height="11" fill="#000" shape-rendering="crispEdges"/>
<text x="1121.2" y="242.3" font-size="11" fill="#d4d4d4" fill-opacity="0.78">9</text><rect x="1121.0" y="224.0" width="6" height="6" fill="#000" shape-rendering="crispEdges"/>
<text x="924.2" y="387.3" font-size="11" fill="#d4d4d4" fill-opacity="0.78">10</text><rect x="924.0" y="370.0" width="6" height="6" fill="#000" shape-rendering="crispEdges"/>
<text x="789.0" y="446.8" font-size="11" fill="#d4d4d4" fill-opacity="0.78">11</text><rect x="788.0" y="429.0" width="6" height="6" fill="#000" shape-rendering="crispEdges"/>
<text x="721.2" y="393.6" font-size="11" fill="#d4d4d4" fill-opacity="0.78">12</text><rect x="721.0" y="376.0" width="6" height="6" fill="#000" shape-rendering="crispEdges"/>
<text x="619.2" y="467.8" font-size="11" fill="#d4d4d4" fill-opacity="0.78">13</text><rect x="619.0" y="450.0" width="6" height="6" fill="#000" shape-rendering="crispEdges"/>
<path d="M1388.5,629 L1377.5,659" stroke="#e8602c" stroke-width="1" fill="none"/>
<rect x="1364" y="587" width="6" height="6" fill="#000"/><rect x="1374" y="659" width="6" height="6" fill="#000"/>
<rect x="1328" y="535" width="11" height="11" fill="#0030ff"/><rect x="1353" y="713" width="11" height="11" fill="#0030ff"/>
</g>
</g>
<g id="rightwin">
<path d="M1678.5,953.5 V10.5 A9,9 0 0 1 1687.5,1.5 H2272 A9,9 0 0 1 2281,10.5 V953.5 A9,9 0 0 1 2272,962.5 H1687.5 A9,9 0 0 1 1678.5,953.5 Z" fill="#202020" stroke="#3e3e3e" stroke-width="1"/>
<path d="M1687,963.5 H2272 A10,10 0 0 0 2280,958" fill="none" stroke="#0a0a0a" stroke-width="1"/>
<path d="M1679,29 V10.5 A8.5,8.5 0 0 1 1687.5,2 H2272 A8.5,8.5 0 0 1 2280.5,10.5 V29 Z" fill="#313131"/>
<path d="M1679,11 A8.5,8.5 0 0 1 1687.5,2.5 H2272 A8.5,8.5 0 0 1 2280.5,11" fill="none" stroke="#565656" stroke-width="1"/>
<circle cx="1692" cy="15" r="6" fill="#4d4d4d"/><circle cx="1712" cy="15" r="6" fill="#4d4d4d"/><circle cx="1732" cy="15" r="6" fill="#4d4d4d"/>
<text x="1919.5" y="18.9" font-size="13.5" fill="#6c6c6c" textLength="117.5" lengthAdjust="spacing" font-weight="bold" >Visual Compositor</text>
<rect x="1679" y="29" width="1599" height="21" fill="#272727"/>
<path d="M1679,50 V31 H1796 A3,3 0 0 1 1799,34 V50 Z" fill="#353535"/>
<text x="1684.3" y="46.0" font-size="12" fill="#c6c6c6" textLength="100.7" lengthAdjust="spacing" >Visual Compositor</text>
<rect x="2263" y="34" width="2" height="2" fill="#c4c4c4"/>
<rect x="2263" y="38" width="2" height="2" fill="#c4c4c4"/>
<rect x="2263" y="42" width="2" height="2" fill="#c4c4c4"/>
<text x="1818.4" y="67.2" font-size="12" fill="#c8c8c8" textLength="107.6" lengthAdjust="spacing" >Editing: Compositor</text>
<text x="2068.4" y="67.0" font-size="12" fill="#c8c8c8" textLength="42.6" lengthAdjust="spacing" >Search:</text>
<rect x="2118" y="54" width="158" height="17" rx="2" fill="#2a2a2a"/><rect x="2119" y="53.5" width="156" height="1" fill="#0f0f0f"/>
<path d="M1679,114 L1697,142 Q1700,146.5 1705,146.5 L1716,146.5" fill="none" stroke="#129412" stroke-width="2.1"/>
<path d="M2092,147 L2140,147 C2180,146 2230,143 2278,141.5" fill="none" stroke="#159a15" stroke-width="2"/>
<path d="M2117,591 L2130,591 C2180,593 2230,598 2278,601.5" fill="none" stroke="#159a15" stroke-width="2"/>
<rect x="1715.0" y="93.5" width="376.5" height="414.5" rx="6" fill="#212121" stroke="#181818" stroke-width="1"/>
<text x="1723.5" y="116.0" font-size="12" fill="#c4c4c4" textLength="95.2" lengthAdjust="spacing" >SplineMaskNode</text>
<rect x="1715.5" y="131" width="200.5" height="56" fill="#3b3b3b"/><rect x="1916" y="131" width="175" height="56" fill="#2e2e2e"/>
<path d="M1716,147 H1723" stroke="#2a6a2a" stroke-width="1.5"/><circle cx="1727.0" cy="147.0" r="3.6" fill="none" stroke="#1aa51a" stroke-width="1.1"/><circle cx="1727.0" cy="147.0" r="1.9" fill="#1aa51a"/>
<text x="1739.4" y="151.0" font-size="11" fill="#c4c4c4" textLength="61.0" lengthAdjust="spacing" >Background</text>
<text x="2033.0" y="151.0" font-size="11" fill="#c4c4c4" textLength="33.7" lengthAdjust="spacing" >output</text>
<circle cx="2078.8" cy="147.0" r="3.6" fill="none" stroke="#1aa51a" stroke-width="1.1"/><circle cx="2078.8" cy="147.0" r="1.9" fill="#1aa51a"/>
<path d="M2083,147 H2092" stroke="#2a6a2a" stroke-width="1.5"/><text x="2039.3" y="175.0" font-size="11" fill="#c4c4c4" textLength="27.4" lengthAdjust="spacing" >mask</text>
<circle cx="2078.8" cy="171.0" r="3.6" fill="none" stroke="#f2f2f2" stroke-width="1.1"/><circle cx="2078.8" cy="171.0" r="1.9" fill="#f2f2f2"/>
<path d="M2083,171 H2092" stroke="#8a8a8a" stroke-width="1.5"/><text x="1719.3" y="202.0" font-size="11" fill="#c4c4c4" textLength="21.9" lengthAdjust="spacing" >Size</text>
<text x="1869.0" y="202.0" font-size="11" fill="#c4c4c4" >X</text>
<rect x="1884" y="190" width="55" height="17" rx="2" fill="#2a2a2a"/><rect x="1885" y="189.5" width="53" height="1" fill="#0f0f0f"/>
<text x="1886.2" y="202.3" font-size="11.5" fill="#d0d0d0" textLength="27.0" lengthAdjust="spacing" >1920</text>
<text x="1945.0" y="202.0" font-size="11" fill="#c4c4c4" >Y</text>
<rect x="1960" y="190" width="52" height="17" rx="2" fill="#2a2a2a"/><rect x="1961" y="189.5" width="50" height="1" fill="#0f0f0f"/>
<text x="1962.4" y="202.3" font-size="11.5" fill="#d0d0d0" textLength="28.0" lengthAdjust="spacing" >1080</text>
<text x="1719.3" y="221.0" font-size="11" fill="#c4c4c4" textLength="28.5" lengthAdjust="spacing" >Invert</text>
<rect x="1869" y="211" width="12" height="12" rx="2" fill="#2a2a2a"/><rect x="1870" y="210.5" width="10" height="1" fill="#0f0f0f"/>
<rect x="1720" y="232" width="366.5" height="17" rx="3" fill="#585858"/>
<text x="1875.5" y="244.2" font-size="11.5" fill="#e0e0e0" textLength="55.9" lengthAdjust="spacing" >Edit Spline</text>
<rect x="1743" y="253" width="320" height="240" fill="#282828"/>
<g transform="translate(1743,283) scale(0.1666667) translate(4,-97)" mask="url(#splmask)"><use href="#scene"/></g>
<text x="1870.6" y="504.3" font-size="11" fill="#c4c4c4" textLength="207.0" lengthAdjust="spacing" >1920x1080, R8G8B8A8_UNorm(32 bits)</text>
<linearGradient id="wg" gradientUnits="userSpaceOnUse" x1="0" y1="171" x2="0" y2="519"><stop offset="0" stop-color="#ffffff"/><stop offset="0.5" stop-color="#d0d0d0"/><stop offset="1" stop-color="#8e8e8e"/></linearGradient>
<path d="M2092,171 H2098 Q2108,171 2110,183 L2158.5,508 Q2160,519 2170,519 H2177" fill="none" stroke="url(#wg)" stroke-width="1.8"/>
<rect x="2176.5" y="465.5" width="73.5" height="70.0" rx="6" fill="#212121" stroke="#181818" stroke-width="1"/>
<text x="2185.3" y="488.3" font-size="12" fill="#c4c4c4" textLength="48.7" lengthAdjust="spacing" >Junction</text>
<path d="M2177,503.5 H2213 V535.5 H2182 A5,5 0 0 1 2177,530.5 Z" fill="#3b3b3b"/><path d="M2213,503.5 H2249.5 V530.5 A5,5 0 0 1 2244.5,535.5 H2213 Z" fill="#2e2e2e"/><path d="M2213.5,503.5 V535.5" stroke="#232323"/>
<path d="M2177,519 H2185" stroke="#5a5a5a" stroke-width="1.5"/><path d="M2241,519.2 L2249.5,520.2" stroke="#505050" stroke-width="1.5"/><path d="M2249.5,520.4 L2177,531" stroke="#4c4c4c" stroke-width="1.6"/><rect x="2249.8" y="518" width="1.2" height="4" fill="#b0b0b0"/><circle cx="2189" cy="519" r="3.7" fill="none" stroke="#b4b4b4" stroke-width="1"/><circle cx="2189" cy="519" r="2.1" fill="#868686"/><circle cx="2237" cy="519" r="3.7" fill="none" stroke="#b4b4b4" stroke-width="1"/><circle cx="2237" cy="519" r="2.1" fill="#868686"/><rect x="1740.5" y="537.5" width="376.0" height="394.0" rx="6" fill="#212121" stroke="#181818" stroke-width="1"/>
<text x="1748.4" y="560.0" font-size="12" fill="#c4c4c4" textLength="75.2" lengthAdjust="spacing" >PreviewNode</text>
<rect x="1741" y="575" width="183" height="32" fill="#3b3b3b"/><rect x="1924" y="575" width="192" height="32" fill="#2e2e2e"/>
<path d="M1738,591 H1748" stroke="#1a8a1a" stroke-width="1.5"/><circle cx="1752.0" cy="591.0" r="3.6" fill="none" stroke="#1aa51a" stroke-width="1.1"/><circle cx="1752.0" cy="591.0" r="1.9" fill="#1aa51a"/>
<text x="1764.0" y="595.0" font-size="11" fill="#c4c4c4" textLength="25.8" lengthAdjust="spacing" >Input</text>
<text x="2058.0" y="595.0" font-size="11" fill="#c4c4c4" textLength="33.8" lengthAdjust="spacing" >output</text>
<circle cx="2104.1" cy="591.0" r="3.6" fill="none" stroke="#1aa51a" stroke-width="1.1"/><circle cx="2104.1" cy="591.0" r="1.9" fill="#1aa51a"/>
<path d="M2108,591 H2117" stroke="#2a6a2a" stroke-width="1.5"/><linearGradient id="gg" gradientUnits="userSpaceOnUse" x1="1740" y1="0" x2="2250" y2="0"><stop offset="0" stop-color="#1f7a1f" stop-opacity="0.55"/><stop offset="0.22" stop-color="#1a9a1a" stop-opacity="0.6"/><stop offset="0.24" stop-color="#1a9a1a"/><stop offset="0.5" stop-color="#3d8a3d"/><stop offset="0.72" stop-color="#528a60"/><stop offset="0.86" stop-color="#5f9070"/><stop offset="1" stop-color="#5f9070"/></linearGradient>
<path d="M1740,590.5 L2176.5,531" fill="none" stroke="url(#gg)" stroke-width="1.8"/>
<rect x="1741.5" y="610" width="12" height="13" rx="2" fill="#2a2a2a"/><rect x="1742" y="609.5" width="11" height="1" fill="#0f0f0f"/>
<path d="M1743.6,617.3 L1746,619.8 L1751,613.8" fill="none" stroke="#e8e8e8" stroke-width="1.6"/>
<text x="1759.3" y="621.7" font-size="11.5" fill="#c8c8c8" textLength="123.2" lengthAdjust="spacing" >Export Render Texture</text>
<rect x="1891" y="610" width="186" height="14" rx="2" fill="#2a2a2a"/><rect x="1892" y="609.5" width="184" height="1" fill="#0f0f0f"/><path d="M2059,610 H2075 A2,2 0 0 1 2077,612 V622 A2,2 0 0 1 2075,624 H2059 Z" fill="#323232"/>
<text x="1893.0" y="621.7" font-size="11.5" fill="#d0d0d0" textLength="126.6" lengthAdjust="spacing" >None (Render Texture)</text>
<circle cx="2067.7" cy="617" r="4" fill="none" stroke="#c8c8c8" stroke-width="1.1"/><circle cx="2067.7" cy="617" r="1.4" fill="#c8c8c8"/>
<rect x="2082.5" y="612" width="29" height="16.5" rx="2" fill="#585858"/>
<text x="2085.2" y="624.0" font-size="11" fill="#d8d8d8" textLength="22.2" lengthAdjust="spacing" >New</text>
<rect x="1768" y="648" width="320" height="240" fill="#282828"/>
<g transform="translate(1768,678) scale(0.1666667) translate(4,-97)"><use href="#splinepath" fill="#ffffff"/></g>
<text x="1895.4" y="899.5" font-size="11" fill="#c4c4c4" textLength="207.3" lengthAdjust="spacing" >1920x1080, R8G8B8A8_UNorm(32 bits)</text>
<text x="1875.3" y="924.0" font-size="11" fill="#c4c4c4" textLength="83.7" lengthAdjust="spacing" >Preview in sRGB</text>
<rect x="1966" y="914" width="12.5" height="12.5" rx="2" fill="#2a2a2a"/><rect x="1967" y="913.5" width="10.5" height="1" fill="#0f0f0f"/>
<linearGradient id="lsh" gradientUnits="userSpaceOnUse" x1="1679" y1="0" x2="1704" y2="0"><stop offset="0" stop-color="#000" stop-opacity="0.35"/><stop offset="1" stop-color="#000" stop-opacity="0"/></linearGradient><rect x="1679" y="2" width="25" height="960" fill="url(#lsh)"/>
</g>
<rect x="1677" y="0" width="1.5" height="966" fill="#0a0a0a"/>
<path filter="url(#blur1)" d="M1476,245.7 L1522.7,222 L1519,234.5 Q1692,242.9 1865,243.2 A2,2 0 0 1 1865,247 Q1692,247.9 1519,256.8 L1522.7,269.4 Z" fill="#000" opacity="0.35"/>
<path d="M1475.7,243.7 L1522.7,220 L1519,232.5 Q1692,240.9 1865,241.2 A2,2 0 0 1 1865,245 Q1692,245.9 1519,254.8 L1522.7,267.4 Z" fill="#ff2d6d" stroke="#ff2d6d" stroke-width="1" stroke-linejoin="round"/>
</svg>
</body></html>
